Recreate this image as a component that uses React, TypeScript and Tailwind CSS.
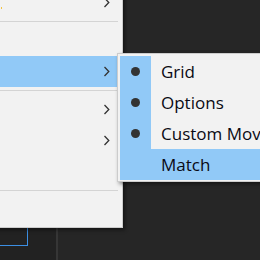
import React from 'react';

const Chevron: React.FC = () => (
  <svg width="7" height="11" viewBox="0 0 7 11" className="shrink-0">
    <path d="M1.5 1 L5.8 5.5 L1.5 10" fill="none" stroke="#333333" strokeWidth="1.3" />
  </svg>
);

const Separator: React.FC<{ h: number }> = ({ h }) => (
  <div className={h === 7 ? 'h-[7px] pt-[3px]' : 'h-[6px] pt-[3px]'}>
    <div className="h-px bg-[#d4d4d4] mr-[2px]" />
  </div>
);

const MenuRow: React.FC<{ h?: string; arrow?: boolean; active?: boolean }> = ({ h = 'h-[31px]', arrow, active }) => (
  <div className={`${h} flex items-center justify-end pr-[10px] ${active ? 'bg-[#91c9f7]' : ''}`}>
    {arrow && <Chevron />}
  </div>
);

const subItems = [
  { label: 'Grid', checked: true },
  { label: 'Options', checked: true },
  { label: 'Custom Move...', checked: true },
  { label: 'Match', checked: false, active: true },
];

export default function App() {
  return (
    <div
      className="relative w-[260px] h-[260px] overflow-hidden bg-[#262626]"
      style={{ fontFamily: '"Open Sans", "Noto Sans", sans-serif' }}
    >
      {/* canvas behind the menus */}
      <div className="flex h-full">
        <div className="w-[56px] bg-[#222222] flex flex-col pt-[190px]">
          <div className="w-[28px] h-[56px] border-r border-b border-[#3c8fe3]" />
        </div>
        <div className="w-[2px] bg-[#363636]" />
        <div className="flex-1" />
      </div>

      {/* main context menu */}
      <div className="absolute left-[-10px] top-[-16px] w-[133px] border border-[#cccccc] bg-[#f2f2f2] pt-[2px] pb-[3px] pl-[2px] pr-[2px] shadow-[2px_2px_4px_rgba(0,0,0,0.45)]">
        <div className="absolute left-[10px] top-[22px] w-px h-[2px] bg-[#f3c340]" />
        <MenuRow arrow />
        <Separator h={6} />
        <MenuRow h="h-[32px]" />
        <MenuRow arrow active />
        <Separator h={7} />
        <MenuRow arrow />
        <MenuRow arrow />
        <MenuRow />
        <Separator h={6} />
        <MenuRow />
      </div>

      {/* submenu */}
      <div className="absolute left-[117px] top-[53px] w-[180px] border border-[#cccccc] bg-[#f2f2f2] pt-[2px] pb-[1px] pl-[2px] shadow-[2px_2px_4px_rgba(0,0,0,0.45)]">
        {subItems.map((item) => (
          <div key={item.label} className={`h-[31px] flex items-center ${item.active ? 'bg-[#91c9f7]' : ''}`}>
            <div className="w-[31px] h-full flex items-center justify-center bg-[#91c9f7]">
              {item.checked && <div className="w-[9px] h-[9px] rounded-full bg-[#333333]" />}
            </div>
            <span className="pl-[10px] text-[17px] text-[#0a0a14] whitespace-nowrap leading-none">{item.label}</span>
          </div>
        ))}
      </div>
    </div>
  );
}
